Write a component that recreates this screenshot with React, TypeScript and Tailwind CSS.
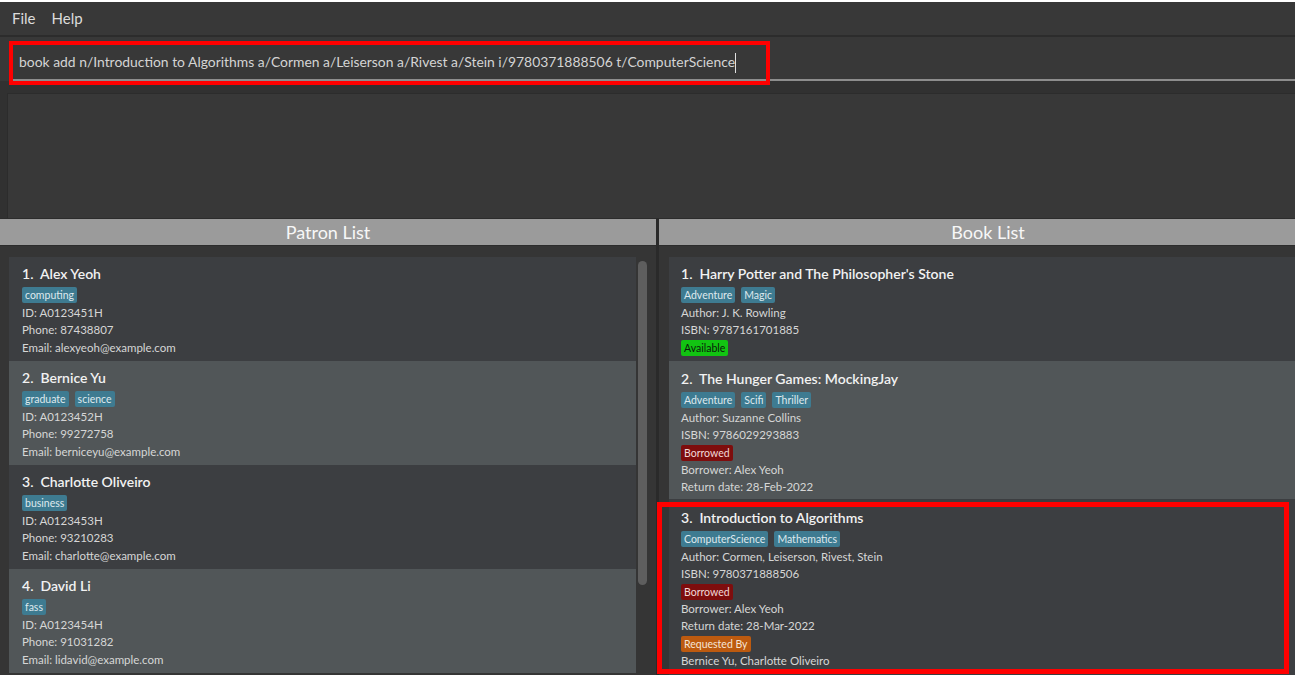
import React from 'react';

type Patron = { name: string; tags: string[]; id: string; phone: string; email: string };
type Book = {
  title: string;
  tags: string[];
  author: string;
  isbn: string;
  status: 'Available' | 'Borrowed';
  borrower?: string;
  returnDate?: string;
  requesters?: string;
};

const patrons: Patron[] = [
  { name: 'Alex Yeoh', tags: ['computing'], id: 'A0123451H', phone: '87438807', email: 'alexyeoh@example.com' },
  { name: 'Bernice Yu', tags: ['graduate', 'science'], id: 'A0123452H', phone: '99272758', email: 'berniceyu@example.com' },
  { name: 'Charlotte Oliveiro', tags: ['business'], id: 'A0123453H', phone: '93210283', email: 'charlotte@example.com' },
  { name: 'David Li', tags: ['fass'], id: 'A0123454H', phone: '91031282', email: 'lidavid@example.com' },
];

const books: Book[] = [
  {
    title: "Harry Potter and The Philosopher's Stone",
    tags: ['Adventure', 'Magic'],
    author: 'J. K. Rowling',
    isbn: '9787161701885',
    status: 'Available',
  },
  {
    title: 'The Hunger Games: MockingJay',
    tags: ['Adventure', 'Scifi', 'Thriller'],
    author: 'Suzanne Collins',
    isbn: '9786029293883',
    status: 'Borrowed',
    borrower: 'Alex Yeoh',
    returnDate: '28-Feb-2022',
  },
  {
    title: 'Introduction to Algorithms',
    tags: ['ComputerScience', 'Mathematics'],
    author: 'Cormen, Leiserson, Rivest, Stein',
    isbn: '9780371888506',
    status: 'Borrowed',
    borrower: 'Alex Yeoh',
    returnDate: '28-Mar-2022',
    requesters: 'Bernice Yu, Charlotte Oliveiro',
  },
];

const font = { fontFamily: '"Segoe UI", Lato, "Liberation Sans", sans-serif' };

function Tag({ label }: { label: string }) {
  return (
    <span className="h-[16px] px-[3px] rounded-[2px] bg-[#3e7b91] text-[#dfe9ee] text-[10.5px] leading-[16px]">
      {label}
    </span>
  );
}

function Line({ children }: { children: React.ReactNode }) {
  return <div className="text-[11.5px] leading-[17.5px] text-[#d6d6d6] whitespace-nowrap">{children}</div>;
}

function Badge({ label, cls }: { label: string; cls: string }) {
  return (
    <div className="flex mt-[1px]">
      <span className={`h-[16px] px-[3px] rounded-[2px] text-[10.5px] leading-[16px] ${cls}`}>{label}</span>
    </div>
  );
}

function CardTitle({ index, text }: { index: number; text: string }) {
  return (
    <div className="text-[14px] leading-[20px] font-semibold text-[#f2f2f2] whitespace-nowrap">
      {index}.&nbsp;&nbsp;{text}
    </div>
  );
}

function PatronCard({ p, i }: { p: Patron; i: number }) {
  return (
    <div className={`h-[104px] pl-[13px] pt-[7px] ${i % 2 === 0 ? 'bg-[#3c3e41]' : 'bg-[#515658]'}`}>
      <CardTitle index={i + 1} text={p.name} />
      <div className="flex gap-[6px] mt-[3px] mb-[0.5px]">
        {p.tags.map((t) => (
          <Tag key={t} label={t} />
        ))}
      </div>
      <Line>ID: {p.id}</Line>
      <Line>Phone: {p.phone}</Line>
      <Line>Email: {p.email}</Line>
    </div>
  );
}

function BookCard({ b, i, cls }: { b: Book; i: number; cls: string }) {
  return (
    <div className={`${cls} pl-[12px] ${i % 2 === 0 ? 'bg-[#3c3e41]' : 'bg-[#515658]'}`}>
      <CardTitle index={i + 1} text={b.title} />
      <div className="flex gap-[6px] mt-[3px] mb-[0.5px]">
        {b.tags.map((t) => (
          <Tag key={t} label={t} />
        ))}
      </div>
      <Line>Author: {b.author}</Line>
      <Line>ISBN: {b.isbn}</Line>
      {b.status === 'Available' ? (
        <Badge label="Available" cls="bg-[#12c412] text-[#0a1a0a]" />
      ) : (
        <Badge label="Borrowed" cls="bg-[#7e0d0d] text-[#f0d8d8]" />
      )}
      {b.borrower && <Line>Borrower: {b.borrower}</Line>}
      {b.returnDate && <Line>Return date: {b.returnDate}</Line>}
      {b.requesters && (
        <>
          <Badge label="Requested By" cls="bg-[#bd5a0f] text-[#f6e4d6]" />
          <Line>{b.requesters}</Line>
        </>
      )}
    </div>
  );
}

function ListHeader({ title }: { title: string }) {
  return (
    <div className="h-[28px] border-y border-[#2c2c2c] bg-[#9b9b9b] flex items-center justify-center text-[18px] text-[#f7f7f7]">
      {title}
    </div>
  );
}

export default function App() {
  return (
    <div className="w-[1295px] h-[676px] overflow-hidden bg-white" style={font}>
      <div className="w-[1317px] h-[673px] mt-[2px] flex flex-col bg-[#383838]">
        {/* Menu bar */}
        <div className="h-[33px] flex items-center gap-[16px] pl-[12px] text-[15px] text-[#dcdcdc]">
          <span>File</span>
          <span>Help</span>
        </div>
        <div className="h-[2px] bg-[#2c2c2c]" />

        {/* Command box */}
        <div className="relative h-[44px] pl-[12px] pt-[7px]">
          <div className="h-[37px] border-b-2 border-[#8d8d8d] flex items-center pl-[7px] pt-[2px] text-[13.9px] text-[#d4d4d4] whitespace-nowrap">
            <span>book add n/Introduction to Algorithms a/Cormen a/Leiserson a/Rivest a/Stein i/9780371888506 t/ComputerScience</span>
            <span className="w-[1px] h-[20px] bg-[#e0e0e0]" />
          </div>
          <div className="absolute left-[9px] top-[4px] w-[761px] h-[44px] border-4 border-[#ff0000]" />
        </div>

        {/* Result display */}
        <div className="h-[137px] bg-[#313131] pl-[7px] pt-[12px]">
          <div className="h-full bg-[#383838] border-l border-t border-[#2c2c2c]" />
        </div>

        {/* Lists */}
        <div className="flex flex-1 min-h-0 bg-[#353535]">
          <div className="w-[656px] flex flex-col">
            <ListHeader title="Patron List" />
            <div className="flex flex-1 min-h-0 pt-[11px] pl-[9px]">
              <div className="w-[627px] flex flex-col">
                {patrons.map((p, i) => (
                  <PatronCard key={p.name} p={p} i={i} />
                ))}
              </div>
              <div className="pl-[2px] pt-[4px]">
                <div className="w-[9px] h-[324px] rounded-full bg-[#5e5e5e]" />
              </div>
            </div>
          </div>
          <div className="w-[3px] bg-[#2a2a2a]" />
          <div className="w-[658px] flex flex-col">
            <ListHeader title="Book List" />
            <div className="relative flex-1 min-h-0 pt-[11px] pl-[10px] flex flex-col">
              <BookCard b={books[0]} i={0} cls="h-[104px] pt-[7px]" />
              <BookCard b={books[1]} i={1} cls="h-[138px] pt-[8px]" />
              <BookCard b={books[2]} i={2} cls="flex-1 pt-[9px]" />
              <div className="absolute left-[-2px] top-[256px] w-[632px] h-[172px] border-[5px] border-[#ff0000]" />
            </div>
          </div>
        </div>
      </div>
    </div>
  );
}
